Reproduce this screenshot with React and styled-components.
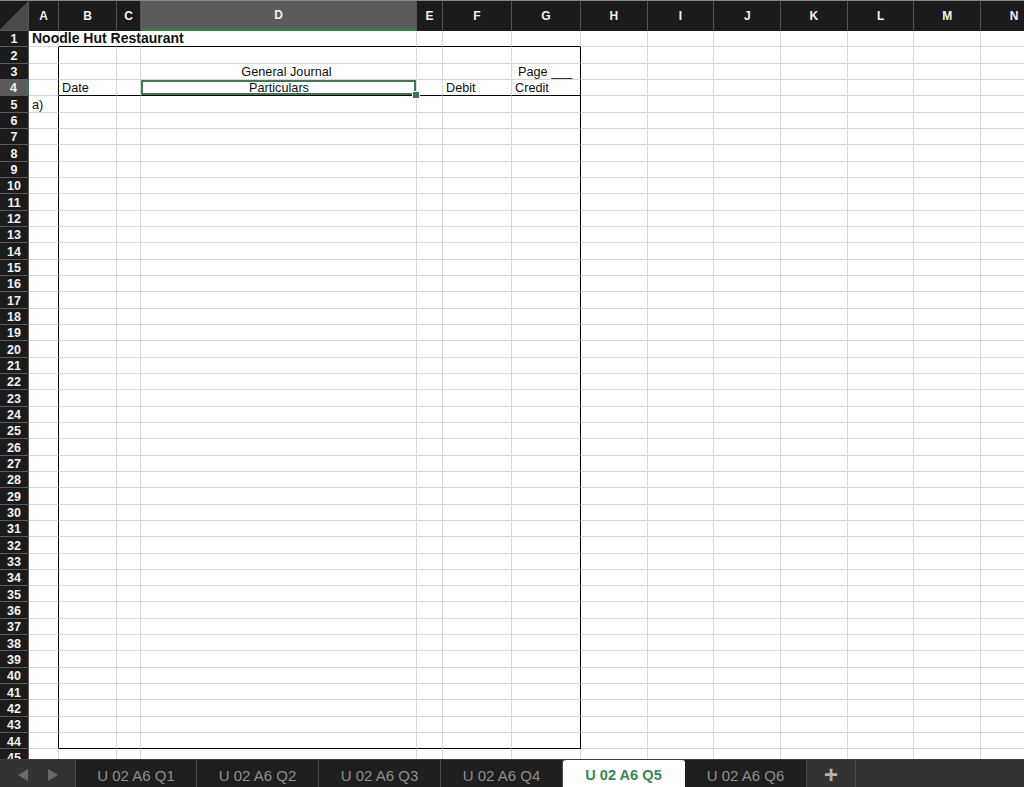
import styled, { createGlobalStyle } from "styled-components";

const GlobalStyle = createGlobalStyle`
    html, body {
        margin: 0;
        padding: 0;
        background: #ffffff;
        overflow: hidden;
        font-family: "Liberation Sans", Arial, sans-serif;
    }
`;

const GREEN = "#3b7a4f";
const GRID = "#d7d7d7";

const colunas = [
    { nome: "A", largura: 30 },
    { nome: "B", largura: 58 },
    { nome: "C", largura: 24 },
    { nome: "D", largura: 276 },
    { nome: "E", largura: 26 },
    { nome: "F", largura: 69 },
    { nome: "G", largura: 69 },
    { nome: "H", largura: 66.7 },
    { nome: "I", largura: 66.7 },
    { nome: "J", largura: 66.7 },
    { nome: "K", largura: 66.7 },
    { nome: "L", largura: 66.7 },
    { nome: "M", largura: 66.7 },
    { nome: "N", largura: 66.7 },
];

const TOTAL_LINHAS = 45;

// conteudo das celulas: "linha-coluna"
const conteudo = {
    "1-A": { texto: "Noodle Hut Restaurant", bold: true },
    "3-D": { texto: "General Journal", align: "center", shift: 15 },
    "3-G": { texto: "Page ___", shift: 3 },
    "4-B": { texto: "Date" },
    "4-D": { texto: "Particulars", align: "center" },
    "4-F": { texto: "Debit" },
    "4-G": { texto: "Credit" },
    "5-A": { texto: "a)" },
};

const caixa = ["B", "C", "D", "E", "F", "G"];

const Sheet = styled.div`
    display: grid;
    grid-template-columns: 29px ${colunas.map((c) => `${c.largura}px`).join(" ")};
    grid-template-rows: 31px repeat(${TOTAL_LINHAS}, 16.33px);
    height: 759px;
    overflow: hidden;
    background: #fff;
`;

const Corner = styled.div`
    background: linear-gradient(135deg, #1b1b1b 50%, #4a4a4a 50%);
    border-top: 1px solid #8a8a8a;
    border-right: 1px solid #555;
    border-bottom: 1px solid #555;
    box-sizing: border-box;
`;

const ColHeader = styled.div`
    display: flex;
    align-items: center;
    justify-content: center;
    box-sizing: border-box;
    padding-top: 1px;
    background: ${(p) => (p.$active ? "#5b5b5b" : "#1b1b1b")};
    border-top: 1px solid #8a8a8a;
    border-right: 1px solid #555;
    border-bottom: ${(p) => (p.$active ? `3px solid ${GREEN}` : "1px solid #1b1b1b")};
    color: #f2f2f2;
    font-size: 12px;
    font-weight: bold;
    white-space: nowrap;
    overflow: hidden;
`;

const RowHeader = styled.div`
    display: flex;
    align-items: center;
    justify-content: center;
    box-sizing: border-box;
    padding-top: 2px;
    background: ${(p) => (p.$active ? "#5b5b5b" : "#1b1b1b")};
    border-bottom: 1px solid #5a5a5a;
    border-right: ${(p) => (p.$active ? `2px solid ${GREEN}` : "1px solid #5a5a5a")};
    color: #f2f2f2;
    font-size: 12.5px;
    font-weight: bold;
    line-height: 1;
`;

const Cell = styled.div`
    position: relative;
    display: flex;
    align-items: flex-end;
    justify-content: ${(p) => (p.$align === "center" ? "center" : "flex-start")};
    box-sizing: border-box;
    padding: 0 2px ${(p) => (p.$bold ? 1 : 0)}px ${(p) => 3 + (p.$shift || 0)}px;
    border-right: 1px solid ${(p) => p.$right || GRID};
    border-bottom: 1px solid ${(p) => p.$bottom || GRID};
    font-size: ${(p) => (p.$bold ? "14px" : "12.7px")};
    font-weight: ${(p) => (p.$bold ? "bold" : "normal")};
    color: #111;
    line-height: 13px;
    white-space: nowrap;
    overflow: visible;
    z-index: ${(p) => (p.$selected ? 2 : p.$bold ? 1 : 0)};
    box-shadow: ${(p) => (p.$selected ? `inset 0 0 0 2px ${GREEN}` : "none")};

    &::after {
        content: "";
        display: ${(p) => (p.$selected ? "block" : "none")};
        position: absolute;
        right: -4px;
        bottom: -4px;
        width: 6px;
        height: 6px;
        background: ${GREEN};
        border: 1px solid #fff;
    }
`;

const TabBar = styled.div`
    display: flex;
    height: 28px;
    background: #333333;
    border-top: 1px solid #3c3c3c;
    box-sizing: border-box;
`;

const NavArea = styled.div`
    display: flex;
    align-items: center;
    justify-content: center;
    gap: 20px;
    width: 76px;
    background: #333333;
    border-right: 1px solid #4a4a4a;
    box-sizing: border-box;
    padding-top: 2px;
`;

const Arrow = styled.span`
    width: 0;
    height: 0;
    border-top: 6px solid transparent;
    border-bottom: 6px solid transparent;
    ${(p) => (p.$dir === "left" ? "border-right: 10px solid #6a6a6a;" : "border-left: 10px solid #6a6a6a;")}
`;

const Tab = styled.div`
    display: flex;
    align-items: center;
    justify-content: center;
    width: ${(p) => p.$w}px;
    box-sizing: border-box;
    background: ${(p) => (p.$active ? "#ffffff" : "#1f1f1f")};
    border-right: 1px solid ${(p) => (p.$active ? "#ffffff" : "#4a4a4a")};
    border-radius: ${(p) => (p.$active ? "3px 3px 0 0" : "0")};
    color: ${(p) => (p.$active ? "#3a8654" : "#8f8f8f")};
    font-size: ${(p) => (p.$active ? "14.6px" : "15px")};
    font-weight: ${(p) => (p.$active ? "bold" : "normal")};
    padding-top: 3px;
`;

const PlusTab = styled.div`
    display: flex;
    align-items: center;
    justify-content: center;
    width: 48px;
    background: #333333;
    border-right: 1px solid #4a4a4a;
    color: #b5b5b5;
    font-size: 24px;
    font-weight: bold;
    line-height: 1;
    padding-top: 2px;
`;

const Filler = styled.div`
    flex: 1;
    background: #333333;
`;

const abas = [
    { nome: "U 02 A6 Q1", w: 121 },
    { nome: "U 02 A6 Q2", w: 122 },
    { nome: "U 02 A6 Q3", w: 122 },
    { nome: "U 02 A6 Q4", w: 122 },
    { nome: "U 02 A6 Q5", w: 122, ativa: true },
    { nome: "U 02 A6 Q6", w: 122 },
];

const App = () => {
    const linhas = Array.from({ length: TOTAL_LINHAS }, (_, i) => i + 1);

    const bordas = (linha, col) => {
        let right;
        let bottom;
        if (linha >= 2 && linha <= 44 && (col === "A" || col === "G")) right = "#000";
        if ((linha === 1 || linha === 4 || linha === 44) && caixa.includes(col)) bottom = "#000";
        return { right, bottom };
    };

    return (
        <>
            <GlobalStyle />
            <Sheet>
                <Corner />
                {colunas.map((c) => (
                    <ColHeader key={c.nome} $active={c.nome === "D"}>{c.nome}</ColHeader>
                ))}
                {linhas.map((linha) => [
                    <RowHeader key={`h${linha}`} $active={linha === 4}>{linha}</RowHeader>,
                    ...colunas.map((c) => {
                        const info = conteudo[`${linha}-${c.nome}`] || {};
                        const { right, bottom } = bordas(linha, c.nome);
                        return (
                            <Cell
                                key={`${linha}-${c.nome}`}
                                $right={right}
                                $bottom={bottom}
                                $align={info.align}
                                $bold={info.bold}
                                $shift={info.shift}
                                $selected={linha === 4 && c.nome === "D"}
                            >
                                {info.texto}
                            </Cell>
                        );
                    }),
                ])}
            </Sheet>
            <TabBar>
                <NavArea>
                    <Arrow $dir="left" />
                    <Arrow $dir="right" />
                </NavArea>
                {abas.map((a) => (
                    <Tab key={a.nome} $w={a.w} $active={a.ativa}>{a.nome}</Tab>
                ))}
                <PlusTab>+</PlusTab>
                <Filler />
            </TabBar>
        </>
    );
};

export default App;
